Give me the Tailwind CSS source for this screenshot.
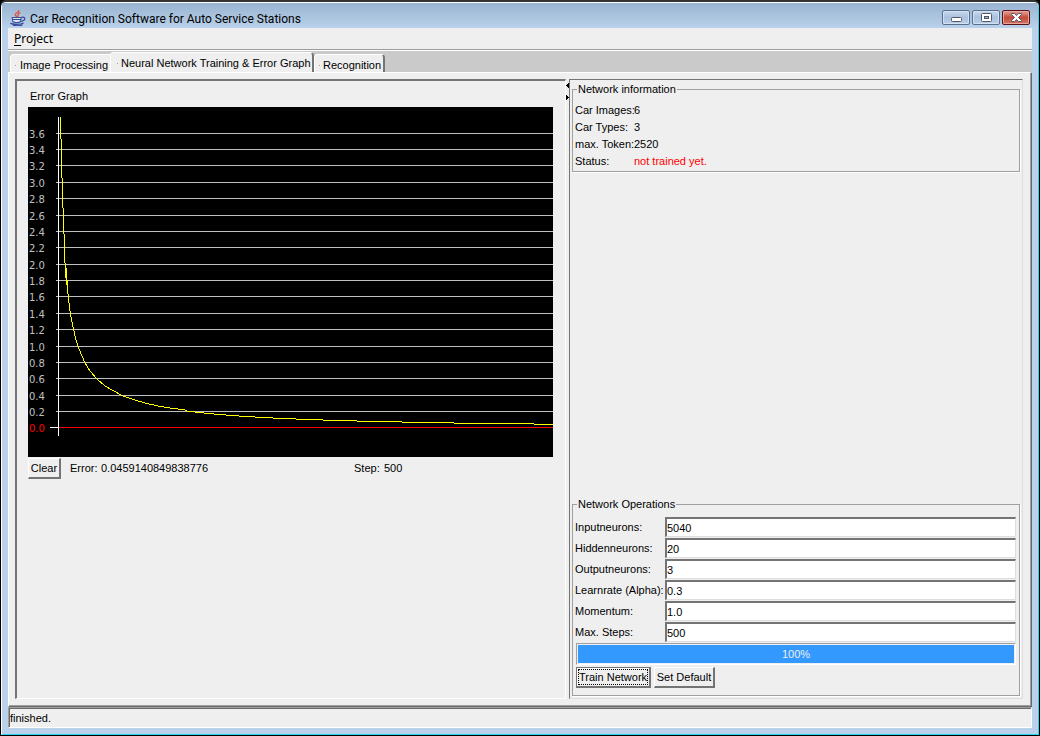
<!DOCTYPE html>
<html lang="en">
<head>
<meta charset="utf-8">
<title>Car Recognition Software for Auto Service Stations</title>
<script src="https://cdn.jsdelivr.net/npm/@tailwindcss/browser@4"></script>
</head>
<body class="h-screen overflow-hidden bg-black font-['Liberation_Sans',Arial,sans-serif] text-[11px] leading-[17px] text-black">
<div class="flex h-full flex-col rounded-t-md border border-t-2 border-black border-t-[#343434] bg-[#b9d1ea]">
<div class="flex min-h-0 flex-1 flex-col rounded-t-md border border-white border-r-[#28d4ec] border-b-[#28d4ec] bg-[#b9d1ea] px-1.5 pb-1.5">
  <header class="-mx-1.5 flex h-[25px] shrink-0 items-center bg-linear-to-b from-[#99b4d1] to-[#b9d1ea] pl-2 pr-2">
    <svg class="mt-1 h-4 w-4" viewBox="0 0 16 16" fill="none" aria-hidden="true">
      <path d="M8.500 0C10 2.500 4 3 5.500 5.500l1.700 1.700M10.300 2.300C6.500 4 9 5 7.500 7" stroke="#e0523b" stroke-width="1.400"/>
      <path d="M2.200 7.500H11.200L10.600 11.500C9 13 4.500 13 2.800 11.500z" fill="#dfe8f5" stroke="#39539b" stroke-width="1.100"/>
      <path d="M3 9.500h8M11.300 7.500c4.500-1.500 5 2.700-.5 4M.5 13c1.500 1.800 10.500 1.800 13 0M3 15.300c3 .6 7 .4 9.500-.3" stroke="#36469a" stroke-width="1.200"/>
    </svg>
    <h1 class="ml-1 mt-1.5 flex-1 font-['Roboto',sans-serif] text-[12px] font-normal leading-4">Car Recognition Software for Auto Service Stations</h1>
    <div class="mt-1 flex gap-0.5">
      <button aria-label="Minimize" class="flex h-[15px] w-7 items-center justify-center rounded-xs border border-[#596f8c] bg-linear-to-b from-[#c7d8ec] via-[#a8c1de] to-[#b9d0ea] shadow-[inset_0_0_0_1px_#d3e2f3]"><svg class="h-[11px] w-[13px]" viewBox="0 0 13 11"><rect x="1.500" y="5.500" width="10" height="4" rx="1" fill="#fff" stroke="#535666"/></svg></button>
      <button aria-label="Maximize" class="flex h-[15px] w-7 items-center justify-center rounded-xs border border-[#596f8c] bg-linear-to-b from-[#c7d8ec] via-[#a8c1de] to-[#b9d0ea] shadow-[inset_0_0_0_1px_#d3e2f3]"><svg class="h-[11px] w-[13px]" viewBox="0 0 13 11"><rect x="1.500" y="1.500" width="10" height="8" rx="1" fill="#fff" stroke="#535666"/><rect x="4.500" y="4.500" width="4" height="2" fill="#9bb5d3" stroke="#535666"/></svg></button>
      <button aria-label="Close" class="flex h-[15px] w-7 items-center justify-center rounded-xs border border-[#5b1219] bg-linear-to-b from-[#e3a398] via-[#c34b37] to-[#d77464] shadow-[inset_0_0_0_1px_#e6a69b]"><svg class="h-[11px] w-[13px]" viewBox="0 0 13 11"><path d="M1.500 1.500h3l2 2 2-2h3v1l-3 3 3 3v1h-3l-2-2-2 2h-3v-1l3-3-3-3z" fill="#fff" stroke="#535666"/></svg></button>
    </div>
  </header>

  <div class="flex min-h-0 flex-1 flex-col bg-[#efefef]">
    <nav class="flex h-[23px] shrink-0 items-center border-b border-white px-1.5 font-['Noto_Sans',sans-serif] text-[12px] shadow-[inset_0_-1px_0_#9d9d9d]">
      <button class="leading-4"><u class="underline-offset-2">P</u>roject</button>
    </nav>

    <div role="tablist" class="flex h-[21px] shrink-0 items-end bg-[#cacaca] pl-0.5 whitespace-nowrap">
      <button role="tab" aria-selected="false" class="flex h-[18px] w-[100px] items-center rounded-tl-sm border-t border-l border-white bg-[#efefef] pl-1 pt-1"><span class="mr-1 h-px w-px bg-[#a0a0a0]"></span>Image Processing</button>
      <button role="tab" aria-selected="true" class="z-10 flex h-5 w-[204px] items-center rounded-t-sm border-t border-l border-white border-r-2 border-r-[#747474] bg-[#efefef] pl-1.5 pt-0.5"><span class="mr-[3px] h-px w-px bg-[#a0a0a0]"></span>Neural Network Training &amp; Error Graph</button>
      <button role="tab" aria-selected="false" class="flex h-[18px] w-[71px] items-center rounded-t-sm border-t border-l border-white border-r-2 border-r-[#747474] bg-[#efefef] pl-1 pt-1"><span class="mr-[3px] h-px w-px bg-[#a0a0a0]"></span>Recognition</button>
    </div>

    <main class="flex min-h-0 flex-1 border-t border-l border-white border-r border-b border-r-[#696969] border-b-[#696969] px-1.5 pt-1.5 pb-[7px] pr-2 shadow-[inset_-1px_-1px_0_#a0a0a0]">
      <section class="flex w-[551px] shrink-0 flex-col border-t-2 border-l-2 border-[#747474] border-r border-b border-r-white border-b-white pl-[11px] pt-[7px]">
        <h2 class="pl-0.5">Error Graph</h2>
        <svg class="mt-0.5 h-[350px] w-[525px] shrink-0 bg-black font-['DejaVu_Sans',sans-serif] text-[10px]" viewBox="0 0 525 350" shape-rendering="crispEdges" role="img" aria-label="Error graph">
          <path stroke="#c0c0c0" d="M28 26.500H525M28 42.500H525M28 58.500H525M28 75.500H525M28 91.500H525M28 108.500H525M28 124.500H525M28 140.500H525M28 157.500H525M28 173.500H525M28 189.500H525M28 206.500H525M28 222.500H525M28 239.500H525M28 255.500H525M28 271.500H525M28 288.500H525M28 304.500H525"/>
          <path stroke="#f00" d="M30 320.500H525"/>
          <path stroke="#fff" d="M30.500 10V329M22 320.500H30"/>
          <path stroke="#ff0" fill="none" d="M32.500 10V32M33.500 32V71M34.500 71V101M35.500 101V127M36.500 127V156M37.500 156V171M38.500 161V178M39.500 173V182L41.500 200L42.500 207L45.500 222L48 233L51 242L54 249L57 256L62 264L69 272L77 279L84 283L95 289L107 293L117 296L130 299L142 301L157 303L160 304.500H167M167 305.500H176M176 306.500H186M186 307.500H198M198 308.500H211M211 309.500H227M227 310.500H245M245 311.500H268M268 312.500H295M295 313.500H329M329 314.500H374M374 315.500H426M426 316.500H506M506 317.500H525"/>
          <g fill="#c0c0c0"><text x="1" y="31">3.6</text><text x="1" y="47">3.4</text><text x="1" y="63">3.2</text><text x="1" y="80">3.0</text><text x="1" y="96">2.8</text><text x="1" y="113">2.6</text><text x="1" y="129">2.4</text><text x="1" y="145">2.2</text><text x="1" y="162">2.0</text><text x="1" y="178">1.8</text><text x="1" y="194">1.6</text><text x="1" y="211">1.4</text><text x="1" y="227">1.2</text><text x="1" y="244">1.0</text><text x="1" y="260">0.8</text><text x="1" y="276">0.6</text><text x="1" y="293">0.4</text><text x="1" y="309">0.2</text><text x="1" y="325" fill="#f00">0.0</text></g>
        </svg>
        <div class="mt-px flex items-center">
          <button class="h-[21px] w-[33px] border border-white border-r-2 border-b-2 border-r-[#747474] border-b-[#747474]">Clear</button>
          <span class="ml-[9px] w-[31px]">Error:</span><span class="w-[253px]">0.0459140849838776</span>
          <span class="w-[30px]">Step:</span><span>500</span>
        </div>
      </section>

      <div class="w-[3px] shrink-0 pt-1">
        <svg class="h-[17px] w-[3px]" viewBox="0 0 3 17" shape-rendering="crispEdges" aria-hidden="true"><path d="M3 0v5L0 2.500zM0 12v5l3-2.500z"/></svg>
      </div>

      <section class="flex min-w-0 flex-1 flex-col justify-between border-t border-l border-[#747474] border-r border-b border-r-[#dedede] border-b-[#dedede] px-0.5 pt-px pb-0.5">
        <fieldset class="border border-[#a0a0a0] px-0.5 pb-px shadow-[1px_1px_0_#fff]">
          <legend class="ml-0.5 px-px">Network information</legend>
          <dl class="mt-1 grid grid-cols-[59px_1fr] whitespace-nowrap">
            <dt>Car Images:</dt><dd>6</dd>
            <dt>Car Types:</dt><dd>3</dd>
            <dt>max. Token:</dt><dd>2520</dd>
            <dt>Status:</dt><dd class="text-[#f00]">not trained yet.</dd>
          </dl>
        </fieldset>

        <fieldset class="border border-[#a0a0a0] px-0.5 pb-[7px] shadow-[1px_1px_0_#fff]">
          <legend class="ml-0.5 px-px">Network Operations</legend>
          <div class="mr-px mt-1 grid grid-cols-[90px_1fr] items-center gap-y-px whitespace-nowrap">
            <label for="n1">Inputneurons:</label><input id="n1" value="5040" class="h-5 min-w-0 border-t-2 border-l-2 border-[#747474] border-r border-b border-r-[#dedede] border-b-[#dedede] bg-white">
            <label for="n2">Hiddenneurons:</label><input id="n2" value="20" class="h-5 min-w-0 border-t-2 border-l-2 border-[#747474] border-r border-b border-r-[#dedede] border-b-[#dedede] bg-white">
            <label for="n3">Outputneurons:</label><input id="n3" value="3" class="h-5 min-w-0 border-t-2 border-l-2 border-[#747474] border-r border-b border-r-[#dedede] border-b-[#dedede] bg-white">
            <label for="n4">Learnrate (Alpha):</label><input id="n4" value="0.3" class="h-5 min-w-0 border-t-2 border-l-2 border-[#747474] border-r border-b border-r-[#dedede] border-b-[#dedede] bg-white">
            <label for="n5">Momentum:</label><input id="n5" value="1.0" class="h-5 min-w-0 border-t-2 border-l-2 border-[#747474] border-r border-b border-r-[#dedede] border-b-[#dedede] bg-white">
            <label for="n6">Max. Steps:</label><input id="n6" value="500" class="h-5 min-w-0 border-t-2 border-l-2 border-[#747474] border-r border-b border-r-[#dedede] border-b-[#dedede] bg-white">
          </div>
          <div role="progressbar" aria-label="Training progress" aria-valuenow="100" class="ml-px mt-px mr-px border border-[#a0a0a0] border-r-white border-b-white p-px"><div class="bg-[#3399ff] text-center leading-[18px] text-[#efefef]">100%</div></div>
          <div class="mt-0.5 ml-px flex gap-[3px]">
            <button class="h-[21px] w-[75px] whitespace-nowrap border border-[#747474] border-r-2 border-b-2 p-px shadow-[inset_1px_1px_0_#fff]"><span class="block border border-dotted border-black leading-[14px]">Train Network</span></button>
            <button class="h-[21px] w-[61px] whitespace-nowrap border border-white border-r-2 border-b-2 border-r-[#747474] border-b-[#747474]">Set Default</button>
          </div>
        </fieldset>
      </section>
    </main>

    <footer class="h-[21px] shrink-0 border-t border-l border-[#a0a0a0] border-r border-b border-r-white border-b-white pl-px leading-5 shadow-[inset_1px_1px_0_#696969]">finished.</footer>
  </div>
</div>
</div>
</body>
</html>
